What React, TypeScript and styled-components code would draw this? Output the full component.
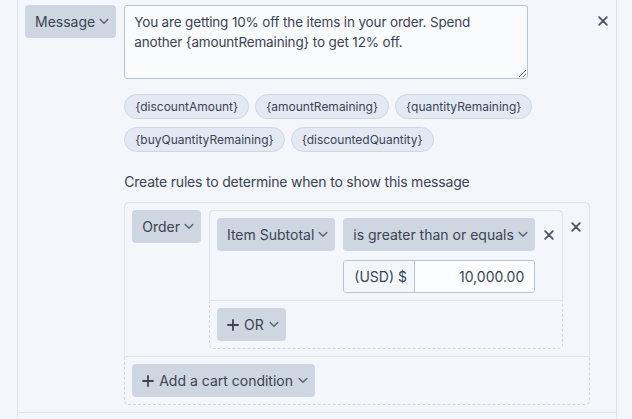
import React from "react";
import styled, { createGlobalStyle } from "styled-components";

const Global = createGlobalStyle`
  html, body { margin: 0; padding: 0; background: #f3f6fa; }
  body { font-family: Inter, "Noto Sans", sans-serif; color: #3b4452; }
  * { box-sizing: border-box; }
`;

const Panel = styled.div`
  width: 600px;
  margin-left: 17px;
  border-left: 1px solid #dfe4ea;
  border-right: 1px solid #dfe4ea;
  min-height: 419px;
`;

const Row = styled.div`
  display: flex;
  align-items: flex-start;
  padding: 5px 0 7px 7px;
  border-bottom: 1px solid #dfe4ea;
`;

const Content = styled.div`
  flex: 1;
  display: flex;
  flex-direction: column;
  min-width: 0;
`;

const SelectButton = styled.button`
  display: inline-flex;
  align-items: center;
  gap: 4px;
  height: 33px;
  padding: 0 7px 0 10px;
  border: none;
  border-radius: 4px;
  background: #cdd6e1;
  color: #3b4452;
  font: 14px/20px Inter, "Noto Sans", sans-serif;
  white-space: nowrap;
  flex-shrink: 0;

  svg {
    flex-shrink: 0;
  }
`;

const MessageSelect = styled(SelectButton)`
  margin-right: 8px;
`;

const Chevron = () => (
  <svg width="10" height="7" viewBox="0 0 10 7" fill="none">
    <path d="M1.2 1.5L5 5.2L8.8 1.5" stroke="#5b6676" strokeWidth="1.5" strokeLinecap="round" strokeLinejoin="round" />
  </svg>
);

const Plus = () => (
  <svg width="12" height="12" viewBox="0 0 12 12" fill="none">
    <path d="M6 1V11M1 6H11" stroke="#3b4452" strokeWidth="1.8" strokeLinecap="round" />
  </svg>
);

const XIcon = () => (
  <svg width="10" height="10" viewBox="0 0 10 10" fill="none">
    <path d="M1.2 1.2L8.8 8.8M8.8 1.2L1.2 8.8" stroke="#4b5563" strokeWidth="1.8" strokeLinecap="round" />
  </svg>
);

const CloseButton = styled.button<{ $top: number }>`
  width: 26px;
  flex-shrink: 0;
  display: flex;
  justify-content: center;
  padding: 0;
  margin-top: ${(p) => p.$top}px;
  border: none;
  background: none;
`;

const MessageArea = styled.textarea`
  width: 404px;
  height: 74px;
  padding: 6px 9px;
  border: 1px solid #b9c4d2;
  border-radius: 3px;
  background: #fafbfd;
  color: #3b4452;
  font: 13.5px/20px Inter, "Noto Sans", sans-serif;
  letter-spacing: -0.15px;
  resize: vertical;
  outline: none;
`;

const Chips = styled.div`
  display: flex;
  flex-wrap: wrap;
  gap: 8px 6px;
  width: 420px;
  margin-top: 15px;
`;

const Chip = styled.span`
  display: inline-flex;
  align-items: center;
  height: 25px;
  padding: 0 10px;
  border: 1px solid #cdd7e3;
  border-radius: 13px;
  background: #e3e9f2;
  color: #3b4452;
  font: 12px/16px Inter, "Noto Sans", sans-serif;
`;

const Hint = styled.p`
  margin: 20px 0 10px;
  font: 14px/20px Inter, "Noto Sans", sans-serif;
  letter-spacing: -0.2px;
  color: #3b4452;
`;

const DashedBox = styled.div`
  border: 1px dashed #d0d6de;
  border-radius: 5px;
`;

const SolidBox = styled.div`
  margin: -1px -1px 0;
  border: 1px solid #dfe4ea;
  border-radius: 5px 5px 0 0;
`;

const CardBody = styled.div`
  display: flex;
  align-items: flex-start;
  padding: 7px 0 7px 7px;
`;

const FooterSection = styled.div`
  padding: 7px;
`;

const OrderSelect = styled(SelectButton)`
  margin-right: 8px;
`;

const GroupWrap = styled(DashedBox)`
  flex: 1;
`;

const ConditionGrid = styled.div`
  display: grid;
  grid-template-columns: auto auto 1fr;
  gap: 9px 8px;
  align-items: center;
  padding: 7px;
`;

const FieldCell = styled.div<{ $col: number; $row: number }>`
  grid-column: ${(p) => p.$col};
  grid-row: ${(p) => p.$row};
  display: flex;
  justify-content: ${(p) => (p.$col === 3 ? "center" : "flex-start")};
`;

const SmallClose = styled.button`
  display: flex;
  padding: 0;
  border: none;
  background: none;
`;

const MoneyInput = styled.div`
  display: flex;
  width: 192px;
  height: 33px;
  border: 1px solid #b9c4d2;
  border-radius: 3px;
  overflow: hidden;
`;

const Addon = styled.span`
  display: flex;
  align-items: center;
  width: 71px;
  padding-left: 10px;
  border-right: 1px solid #b9c4d2;
  background: #f3f6fa;
  font: 14px/20px Inter, "Noto Sans", sans-serif;
  color: #3b4452;
`;

const Amount = styled.input`
  flex: 1;
  min-width: 0;
  border: none;
  padding: 0 10px;
  background: #fbfcfe;
  text-align: right;
  font: 14px/20px Inter, "Noto Sans", sans-serif;
  color: #3b4452;
  outline: none;
`;

const AddButton = styled(SelectButton)`
  gap: 5px;
`;

const chips = [
  "{discountAmount}",
  "{amountRemaining}",
  "{quantityRemaining}",
  "{buyQuantityRemaining}",
  "{discountedQuantity}",
];

export default function App() {
  return (
    <>
      <Global />
      <Panel>
        <Row>
          <MessageSelect>
            Message <Chevron />
          </MessageSelect>
          <Content>
            <MessageArea
              readOnly
              value="You are getting 10% off the items in your order. Spend another {amountRemaining} to get 12% off."
            />
            <Chips>
              {chips.map((c) => (
                <Chip key={c}>{c}</Chip>
              ))}
            </Chips>
            <Hint>Create rules to determine when to show this message</Hint>
            <DashedBox>
              <SolidBox>
                <CardBody>
                  <OrderSelect>
                    Order <Chevron />
                  </OrderSelect>
                  <GroupWrap>
                    <SolidBox>
                      <ConditionGrid>
                        <FieldCell $col={1} $row={1}>
                          <SelectButton>
                            Item Subtotal <Chevron />
                          </SelectButton>
                        </FieldCell>
                        <FieldCell $col={2} $row={1}>
                          <SelectButton>
                            is greater than or equals <Chevron />
                          </SelectButton>
                        </FieldCell>
                        <FieldCell $col={3} $row={1}>
                          <SmallClose>
                            <XIcon />
                          </SmallClose>
                        </FieldCell>
                        <FieldCell $col={2} $row={2}>
                          <MoneyInput>
                            <Addon>(USD) $</Addon>
                            <Amount readOnly value="10,000.00" />
                          </MoneyInput>
                        </FieldCell>
                      </ConditionGrid>
                    </SolidBox>
                    <FooterSection>
                      <AddButton>
                        <Plus /> OR <Chevron />
                      </AddButton>
                    </FooterSection>
                  </GroupWrap>
                  <CloseButton $top={12}>
                    <XIcon />
                  </CloseButton>
                </CardBody>
              </SolidBox>
              <FooterSection>
                <AddButton>
                  <Plus /> Add a cart condition <Chevron />
                </AddButton>
              </FooterSection>
            </DashedBox>
          </Content>
          <CloseButton $top={11}>
            <XIcon />
          </CloseButton>
        </Row>
      </Panel>
    </>
  );
}
